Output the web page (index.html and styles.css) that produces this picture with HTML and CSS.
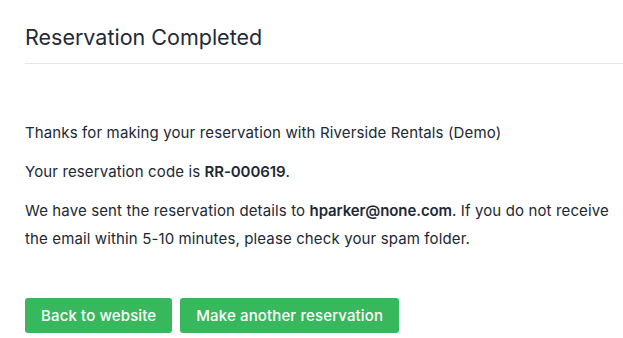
FILE: index.html
```html
<!DOCTYPE html>
<html>
<head>
<meta charset="utf-8">
<link rel="stylesheet" href="styles.css">
</head>
<body>
<div class="page">
  <div class="header">
    <h1 class="title">Reservation Completed</h1>
  </div>
  <div class="content">
    <p class="line">Thanks for making your reservation with Riverside Rentals (Demo)</p>
    <p class="line">Your reservation code is <strong>RR-000619</strong>.</p>
    <p class="line">We have sent the reservation details to <strong>hparker@none.com</strong>. If you do not receive the email within 5-10 minutes, please check your spam folder.</p>
  </div>
  <div class="actions">
    <a class="btn" href="#">Back to website</a>
    <a class="btn" href="#">Make another reservation</a>
  </div>
</div>
</body>
</html>
```
FILE: styles.css
```css
html, body {
  margin: 0;
  padding: 0;
  background: #ffffff;
}
body {
  font-family: Inter, "Noto Sans", sans-serif;
  color: #212834;
  font-size: 15px;
  letter-spacing: 0.13px;
}
.page {
  padding-left: 25px;
}
.header {
  border-bottom: 1px solid #e5e7eb;
  padding-top: 23px;
  padding-bottom: 12px;
}
.title {
  margin: 0;
  font-size: 21.5px;
  font-weight: 400;
  letter-spacing: 0;
  line-height: 28px;
  color: #232a36;
}
.content {
  padding-top: 55px;
}
.line {
  margin: 0 0 11px 0;
  line-height: 28px;
}
.line strong {
  font-weight: 600;
  letter-spacing: -0.1px;
}
.actions {
  display: flex;
  gap: 8px;
  padding-top: 34px;
}
.btn {
  display: inline-block;
  background: #37b85c;
  color: #ffffff;
  text-decoration: none;
  font-weight: 500;
  font-size: 15px;
  line-height: 35px;
  padding: 0 16px;
  border-radius: 3px;
}
```
